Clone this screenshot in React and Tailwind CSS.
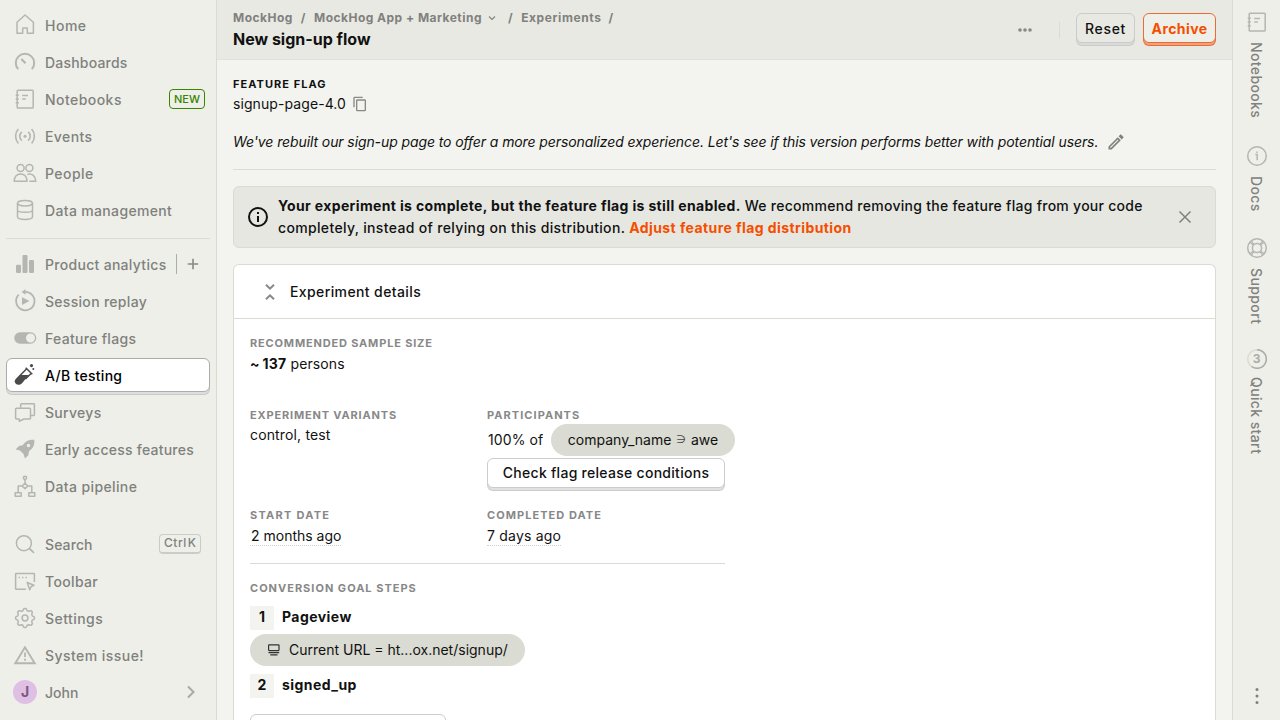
import React from 'react';

const Svg = ({ children, className = '' }) => (
  <svg
    viewBox="0 0 24 24"
    className={`h-6 w-6 shrink-0 ${className}`}
    fill="none"
    stroke="currentColor"
    strokeWidth="1.5"
    strokeLinejoin="round"
  >
    {children}
  </svg>
);

const fill = { fill: 'currentColor', stroke: 'none' };

// Eight-lobed outline of the settings gear, sampled around the circle.
const gearPoints = Array.from({ length: 96 }, (_, i) => {
  const a = (i / 96) * Math.PI * 2;
  const r = 8.5 + 0.95 * Math.tanh(2.2 * Math.cos(8 * a));
  return `${(12 + r * Math.sin(a)).toFixed(2)},${(12 - r * Math.cos(a)).toFixed(2)}`;
}).join(' ');

const icons = {
  home: <path d="M12 2 4 9.2V20.3H9.7V15.5Q9.7 14.9 10.3 14.9H13.7Q14.3 14.9 14.3 15.5V20.3H20.4V9.2Z" />,
  gauge: (
    <>
      <path d="M5.2 19.2A9.2 9.2 0 1 1 18.8 19.2" strokeWidth="2" />
      <path d="M8.3 9 12.5 13.2" strokeWidth="2.2" />
    </>
  ),
  notebook: (
    <>
      <rect x="4.2" y="3.2" width="16" height="17.8" rx="0.8" />
      <path d="M2.7 8.3H5.8M2.7 12H5.8M2.7 15.8H5.8M9.2 8.4H15M9.2 12H12.8" />
    </>
  ),
  events: (
    <>
      <path d="M5.4 5C1.7 9 1.7 15.5 5.4 19.5M18.6 5C22.3 9 22.3 15.5 18.6 19.5M8.8 7.9C6.1 10.5 6.1 14 8.8 16.6M15.2 7.9C17.9 10.5 17.9 14 15.2 16.6" strokeWidth="1.6" />
      <circle cx="12" cy="12.2" r="1.5" {...fill} />
    </>
  ),
  people: (
    <>
      <circle cx="7.6" cy="6.9" r="3.5" />
      <circle cx="16.4" cy="6.9" r="3.5" />
      <path d="M1.2 20.3C1.2 15.5 4 13 7.6 13S14 15.5 14 20.3ZM14.3 13.4C19 12 22.8 15.2 22.8 20.3H16.3" />
    </>
  ),
  database: (
    <>
      <ellipse cx="12" cy="5.2" rx="7.5" ry="2.7" />
      <path d="M4.5 5.2V18.8C4.5 22.3 19.5 22.3 19.5 18.8V5.2M4.5 12C4.5 15 19.5 15 19.5 12" />
    </>
  ),
  bars: (
    <g {...fill}>
      <rect x="3" y="12.7" width="5" height="8.3" rx="1.200" />
      <rect x="9.5" y="3" width="5" height="18" rx="1.200" />
      <rect x="16" y="8" width="5" height="13" rx="1.200" />
    </g>
  ),
  replay: (
    <>
      <path d="M5.700 5.700A9.200 9.200 0 1 0 12 2.900H10.500" strokeWidth="1.800" />
      <path d="M8.600 2.900 12.500 0V5.800Z" {...fill} />
      <path d="M9 8.200V16L16.500 12.100Z" {...fill} />
    </>
  ),
  toggle: (
    <path fillRule="evenodd" d="M7 6.200A5.800 5.800 0 0 0 7 17.800H17.500A5.800 5.800 0 0 0 17.500 6.200ZM17.500 7.500A4.500 4.500 0 1 1 17.500 16.500A4.500 4.500 0 0 1 17.500 7.500Z" {...fill} />
  ),
  flask: (
    <>
      <path d="M12.700 4.700 19.300 11.300M13.700 5.700 7 12.500M18.300 10.300 12.500 16" strokeWidth="1.500" />
      <path d="M6.500 12H15.900L9 20.300C4.500 24.400 -.6 19.300 2.900 15.700Z" {...fill} />
      <circle cx="18.500" cy="2.600" r="1.600" {...fill} />
      <circle cx="20.300" cy="6" r="1" {...fill} />
    </>
  ),
  surveys: (
    <>
      <path d="M7.700 7.700V4.500Q7.700 3.800 8.400 3.800H20.700Q21.400 3.800 21.400 4.500V14.800Q21.400 15.500 20.700 15.500H18" />
      <path d="M3.300 8.200H16.700Q17.500 8.200 17.500 9V18.300Q17.500 19 16.700 19H11L6.200 21.300V19H3.300Q2.600 19 2.600 18.300V9Q2.600 8.200 3.300 8.200Z" />
    </>
  ),
  rocket: (
    <path fillRule="evenodd" d="M21.300 2.700C15 2.300 12.500 4.500 9.700 8.200L6 9 2.600 12.500 7 13.500 10.500 17 12 21.500 15.300 18.200 16 14.200C20.200 11 21.700 8.500 21.300 2.700ZM15.500 6.800A1.700 1.700 0 1 1 15.500 10.200A1.700 1.700 0 0 1 15.500 6.800Z" {...fill} />
  ),
  pipeline: (
    <>
      <circle cx="12" cy="3.800" r="1.600" />
      <path d="M12 5.300V9.300M12 9.300 14.900 12 12 14.600 9.100 12ZM9.100 12H5.200V18.700M14.900 12H18.800V18.700" />
      <rect x="2.200" y="18.700" width="6" height="3.500" />
      <rect x="15.800" y="18.700" width="6" height="3.500" />
    </>
  ),
  search: (
    <>
      <circle cx="10.900" cy="11.200" r="7.500" />
      <path d="M16.300 16.300 21 20.800" strokeWidth="1.800" />
    </>
  ),
  toolbar: (
    <>
      <path d="M13 20.300H3.200Q2.600 20.300 2.600 19.700V5.200Q2.600 4.600 3.200 4.600H20.800Q21.400 4.600 21.400 5.200V13" />
      <path d="M14.200 13.500 21 16.300 18.200 17.500 16.700 20.800Z" />
      <path d="M5.500 8.400H6.900M9 8.400H10.400M12.500 8.400H13.900" />
    </>
  ),
  gear: (
    <>
      <polygon points={gearPoints} />
      <circle cx="12" cy="12" r="2.900" />
    </>
  ),
  warning: (
    <>
      <path d="M12 4.300 2.300 20.200H21.700Z" strokeWidth="1.900" strokeLinejoin="miter" />
      <path d="M12 9.500V14M12 15.700V17.700" strokeWidth="1.800" />
    </>
  ),
  info: (
    <>
      <circle cx="12" cy="12" r="9.300" />
      <path d="M10.300 10.500H12.200V16.300M12 7.400V8.900" />
    </>
  ),
  support: (
    <>
      <circle cx="12" cy="12" r="9.300" />
      <circle cx="12" cy="12" r="4.600" />
      <path d="M5 6.200 8.300 9.100M6.200 5 9.100 8.300M19 6.200 15.700 9.100M17.800 5 14.900 8.300M5 17.800 8.300 14.900M6.200 19 9.100 15.700M19 17.800 15.700 14.900M17.800 19 14.900 15.700" strokeWidth="1.200" />
    </>
  ),
};

const NavItem = ({ icon, label, active, tracking = 'tracking-[0.3px]', children }) => (
  <div className="flex h-[37px] items-center">
    <div
      className={
        active
          ? 'flex h-[34px] w-full items-center rounded-md border border-[#acacaa] bg-white pl-1.5 text-black shadow-[0_3px_0_-1px_#e0dde0,0_3px_0_0_#c9c9c8]'
          : 'flex h-[34px] w-full items-center pl-[7px]'
      }
    >
      <Svg className={active ? 'text-[#4b4b4b]' : 'text-[#b5b6b1]'}>{icons[icon]}</Svg>
      <span className={`ml-2 whitespace-nowrap pt-0.5 ${tracking}`}>{label}</span>
      {children}
    </div>
  </div>
);

const Label = ({ children, className = 'text-[#888888] tracking-[1.05px]' }) => (
  <h4 className={`text-[11px] leading-4 font-bold uppercase ${className}`}>{children}</h4>
);

const RailItem = ({ icon, label, className }) => (
  <div className={`flex flex-col items-center ${className}`}>
    {icon}
    <span className="mr-0.5 whitespace-nowrap text-[14px] leading-5 tracking-[0.38px] [writing-mode:vertical-rl]">{label}</span>
  </div>
);

const Step = ({ n, name }) => (
  <div className="flex h-6 items-center gap-2 font-bold">
    <span className="flex h-6 w-6 items-center justify-center bg-[#f3f4ef] pb-0.5">{n}</span>
    <span className="pb-0.5 tracking-[0.45px]">{name}</span>
  </div>
);

export default function App() {
  return (
    <div className="flex h-[720px] w-[1280px] overflow-hidden bg-[#f3f4ef] font-['Inter',sans-serif] text-[14px] leading-5 text-[#111111]">
      <nav className="flex w-[217px] shrink-0 flex-col border-r border-[#dadbd3] bg-[#eeefe9] px-1.5 pt-1.5 pb-2.5 font-medium text-[#80817d]">
        <NavItem icon="home" label="Home" tracking="tracking-[0.5px]" />
        <NavItem icon="gauge" label="Dashboards" tracking="tracking-[0.2px]" />
        <NavItem icon="notebook" label="Notebooks" tracking="tracking-[0.45px]">
          <span className="mr-[5px] ml-auto flex h-5 items-center rounded border border-[#388600] px-1 text-[11px] text-[#388600]">NEW</span>
        </NavItem>
        <NavItem icon="events" label="Events" tracking="tracking-[0.4px]" />
        <NavItem icon="people" label="People" tracking="tracking-[0.45px]" />
        <NavItem icon="database" label="Data management" tracking="tracking-[0.34px]" />
        <div className="mt-2.5 mb-1.5 h-px bg-[#dadbd3]" />
        <NavItem icon="bars" label="Product analytics">
          <div className="ml-auto flex h-5 items-center border-l border-[#acada8]">
            <svg viewBox="0 0 12 12" className="mr-[11px] ml-2.5 h-3 w-3" stroke="#888985" strokeWidth="1.600">
              <path d="M6 .8V11.200M.8 6H11.200" />
            </svg>
          </div>
        </NavItem>
        <NavItem icon="replay" label="Session replay" />
        <NavItem icon="toggle" label="Feature flags" />
        <NavItem icon="flask" label="A/B testing" active />
        <NavItem icon="surveys" label="Surveys" />
        <NavItem icon="rocket" label="Early access features" tracking="tracking-[0.24px]" />
        <NavItem icon="pipeline" label="Data pipeline" tracking="tracking-[0.38px]" />
        <div className="mt-auto">
          <NavItem icon="search" label="Search" tracking="tracking-[0.1px]">
            <span className="mr-[9px] ml-auto flex h-5 items-center rounded border border-b-2 border-[#cbccc7] px-1 text-[12px]">
              <span className="tracking-[0.5px]">Ctrl</span>
              <span className="ml-px">K</span>
            </span>
          </NavItem>
          <NavItem icon="toolbar" label="Toolbar" tracking="tracking-[0.35px]" />
          <NavItem icon="gear" label="Settings" tracking="tracking-[0.45px]" />
          <NavItem icon="warning" label="System issue!" tracking="tracking-[0.45px]" />
          <div className="flex h-[37px] items-center pl-[7px]">
            <span className="flex h-6 w-6 items-center justify-center rounded-full bg-[#e0bfe5] font-bold text-[#775a7c]">J</span>
            <span className="ml-2 pt-0.5">John</span>
            <svg viewBox="0 0 12 14" className="mr-[13px] ml-auto h-3.5 w-3" fill="none" stroke="#a9aaa5" strokeWidth="2">
              <path d="M3 1.500 8.500 7 3 12.500" />
            </svg>
          </div>
        </div>
      </nav>

      <div className="flex min-w-0 flex-1 flex-col">
        <header className="flex h-[60px] shrink-0 items-start justify-between border-b border-[#e0e1dc] bg-[#e8e9e3] px-4">
          <div className="pt-2">
            <div className="flex items-center text-[12px] leading-5 font-bold tracking-[0.48px] whitespace-nowrap text-[#80817d]">
              <span>MockHog</span>
              <span className="mx-2">/</span>
              <span>MockHog App + Marketing</span>
              <svg viewBox="0 0 8 8" className="mr-3 ml-1.5 h-2 w-2" fill="none" stroke="currentColor" strokeWidth="1.100">
                <path d="M1 2.500 4 5.500 7 2.500" />
              </svg>
              <span className="mr-2">/</span>
              <span className="tracking-[0.6px]">Experiments</span>
              <span className="mx-[7px]">/</span>
            </div>
            <h1 className="-mt-px text-[16px] leading-6 font-bold">New sign-up flow</h1>
          </div>
          <div className="flex items-center pt-[13px]">
            <svg viewBox="0 0 14 4" className="mt-[3px] h-1 w-3.5" fill="#888985">
              <circle cx="2" cy="2" r="1.800" />
              <circle cx="7" cy="2" r="1.800" />
              <circle cx="12" cy="2" r="1.800" />
            </svg>
            <div className="mt-[3px] mr-4 ml-[27px] h-4 w-px bg-[#dadbd3]" />
            <button className="h-[30px] w-[59px] rounded-md border border-[#cbcbc9] bg-[#e8e9e3] pt-0.5 font-medium tracking-[0.7px] shadow-[0_3px_0_-1px_#dcd9dc,0_3px_0_0_#cbcbc9]">Reset</button>
            <button className="ml-2 h-[30px] w-[73px] rounded-md border border-[#eb6c33] bg-[#eeefe9] pt-0.5 font-bold tracking-[0.4px] text-[#f54e00] shadow-[0_3px_0_-1px_#f0a27f,0_3px_0_0_#ea6d35]">Archive</button>
          </div>
        </header>

        <main className="flex min-h-0 flex-1 flex-col px-4 pt-4">
          <Label className="tracking-[1.05px] text-[#111111]">Feature flag</Label>
          <div className="mt-0.5 flex h-5 items-center">
            <span className="tracking-[0.08px]">signup-page-4.0</span>
            <svg viewBox="0 0 24 24" className="ml-1.5 h-4 w-4" fill="#888985">
              <path d="M16 1H4a2 2 0 0 0-2 2v14h2V3h12V1zm3 4H8a2 2 0 0 0-2 2v14a2 2 0 0 0 2 2h11a2 2 0 0 0 2-2V7a2 2 0 0 0-2-2zm0 16H8V7h11v14z" />
            </svg>
          </div>
          <div className="mt-[18px] flex h-5 items-center">
            <span className="tracking-[-0.098px] whitespace-nowrap italic">
              We've rebuilt our sign-up page to offer a more personalized experience. Let's see if this version performs better with potential users.
            </span>
            <svg viewBox="0 0 24 24" className="ml-2 h-5 w-5 shrink-0" fill="#80817d">
              <path d="M14.060 9.020l.92.92L5.920 19H5v-.92l9.060-9.060M17.660 3c-.25 0-.51.1-.7.29l-1.830 1.830 3.750 3.750 1.830-1.830a.996.996 0 0 0 0-1.410l-2.340-2.340c-.2-.2-.45-.29-.71-.29zm-3.600 3.190L3 17.250V21h3.750L17.810 9.940l-3.750-3.750z" />
            </svg>
          </div>
          <div className="mt-[17px] h-px shrink-0 bg-[#dadbd3]" />

          <div className="mt-4 flex h-[62px] shrink-0 items-center rounded-md border border-[#dadbd5] bg-[#e6e7e1] pr-[23px] pl-3 font-medium">
            <svg viewBox="0 0 24 24" className="h-6 w-6 shrink-0" fill="#111111">
              <path d="M11 7h2v2h-2zm0 4h2v6h-2zm1-9a10 10 0 1 0 0 20 10 10 0 0 0 0-20zm0 18a8 8 0 1 1 0-16 8 8 0 0 1 0 16z" />
            </svg>
            <p className="ml-2 flex-1 leading-[22px] tracking-[0.27px] whitespace-nowrap">
              <b className="tracking-[0.357px]">Your experiment is complete, but the feature flag is still enabled.</b> We recommend removing the feature flag from your code
              <br />
              <span className="tracking-[0.34px]">completely, instead of relying on this distribution. </span>
              <b className="tracking-[0.42px] text-[#f54e00]">Adjust feature flag distribution</b>
            </p>
            <svg viewBox="0 0 14 14" className="h-3.5 w-3.5 shrink-0" fill="none" stroke="#80817d" strokeWidth="1.500">
              <path d="M1.500 1.500 12.500 12.500M12.500 1.500 1.500 12.500" />
            </svg>
          </div>

          <section className="mt-4 min-h-0 flex-1 overflow-hidden rounded-t-md border border-b-0 border-[#dadbd3] bg-white">
            <div className="flex h-[54px] items-center border-b border-[#dadbd3] pl-6 font-medium">
              <svg viewBox="0 0 24 24" className="h-6 w-6" fill="none" stroke="#888888" strokeWidth="2">
                <path d="M8 4.700 12 8.700 16 4.700M8 19.300 12 15.300 16 19.300" />
              </svg>
              <span className="ml-2 tracking-[0.39px]">Experiment details</span>
            </div>
            <div className="px-4 pt-4">
              <Label className="tracking-[0.83px] text-[#888888]">Recommended sample size</Label>
              <p className="mt-[3px] tracking-[0.1px]"><b>~</b><b className="ml-[3px] tracking-[0.2px]">137</b> persons</p>
              <div className="mt-[33px] grid w-[475px] grid-cols-[237px_1fr]">
                <div>
                  <Label className="tracking-[0.83px] text-[#888888]">Experiment variants</Label>
                  <p className="mt-0.5 tracking-[0.15px]">control, test</p>
                </div>
                <div className="flex flex-col items-start">
                  <Label>Participants</Label>
                  <div className="mt-px flex h-8 items-center whitespace-nowrap">
                    <span className="w-16 pl-px tracking-[0.1px]">100% of</span>
                    <span className="flex h-8 w-[184px] items-center justify-center gap-[5px] rounded-full bg-[#dadbd2]">
                      <span>company_name</span>
                      <span className="font-['DejaVu_Sans',sans-serif] text-[11px] text-[#444444]">∋</span>
                      <span>awe</span>
                    </span>
                  </div>
                  <button className="mt-0.5 h-[30px] w-[238px] rounded-md border border-[#cccccc] bg-white font-medium tracking-[0.28px] shadow-[0_3px_0_-1px_#e2e0e2,0_3px_0_0_#cccccc]">Check flag release conditions</button>
                </div>
                <div className="mt-[19px]">
                  <Label className="tracking-[1.25px] text-[#888888]">Start date</Label>
                  <span className="mt-1 inline-block border-b border-dotted border-[#d0d1c9] pl-px leading-[18px]">2 months ago</span>
                </div>
                <div className="mt-[19px]">
                  <Label>Completed date</Label>
                  <span className="mt-1 inline-block border-b border-dotted border-[#d0d1c9] leading-[18px] tracking-[0.2px]">7 days ago</span>
                </div>
              </div>
              <div className="mt-[17px] h-px w-[475px] bg-[#dadbd3]" />
              <div className="mt-4"><Label className="tracking-[1px] text-[#888888]">Conversion goal steps</Label></div>
              <div className="mt-2.5"><Step n="1" name="Pageview" /></div>
              <div className="mt-1 flex h-8 w-[275px] items-center rounded-full bg-[#dadbd2] pl-[17px] whitespace-nowrap">
                <svg viewBox="0 0 14 14" className="h-3.5 w-3.5" fill="none" stroke="#333333" strokeWidth="1.200">
                  <rect x="1.600" y="1.800" width="10.400" height="5.800" rx=".5" />
                  <path d="M1.500 9.700H12.200M3.300 11.800H10.500" />
                </svg>
                <span className="ml-2">Current URL = ht...ox.net/signup/</span>
              </div>
              <div className="mt-2"><Step n="2" name="signed_up" /></div>
              <div className="mt-4 h-8 w-[196px] rounded-md border border-[#cccccc]" />
            </div>
          </section>
        </main>
      </div>

      <aside className="flex w-12 shrink-0 flex-col items-center border-l border-[#dadbd3] bg-[#eeefe9] pt-2.5 font-medium text-[#80817d]">
        <RailItem icon={<Svg className="text-[#b5b6b1]">{icons.notebook}</Svg>} label="Notebooks" className="h-[134px] gap-2" />
        <RailItem icon={<Svg className="text-[#b5b6b1]">{icons.info}</Svg>} label="Docs" className="h-[92px] gap-2" />
        <RailItem icon={<Svg className="text-[#b5b6b1]">{icons.support}</Svg>} label="Support" className="h-[111px] gap-2" />
        <RailItem
          icon={
            <div className="grid h-6 w-6 place-items-center text-[#acada8]">
              <Svg className="col-start-1 row-start-1">
                <circle cx="12" cy="12" r="9.300" stroke="#dadbd5" />
                <path d="M12 2.700A9.300 9.300 0 1 1 6.500 19.500" />
              </Svg>
              <span className="col-start-1 row-start-1 text-[12px] leading-4 font-bold">3</span>
            </div>
          }
          label="Quick start"
          className="h-[120px] gap-1.5"
        />
        <svg viewBox="0 0 4 18" className="mt-auto mb-[15px] h-[18px] w-1 shrink-0" fill="#80817d">
          <circle cx="2" cy="2.500" r="1.500" />
          <circle cx="2" cy="9" r="1.500" />
          <circle cx="2" cy="15.500" r="1.500" />
        </svg>
      </aside>
    </div>
  );
}
